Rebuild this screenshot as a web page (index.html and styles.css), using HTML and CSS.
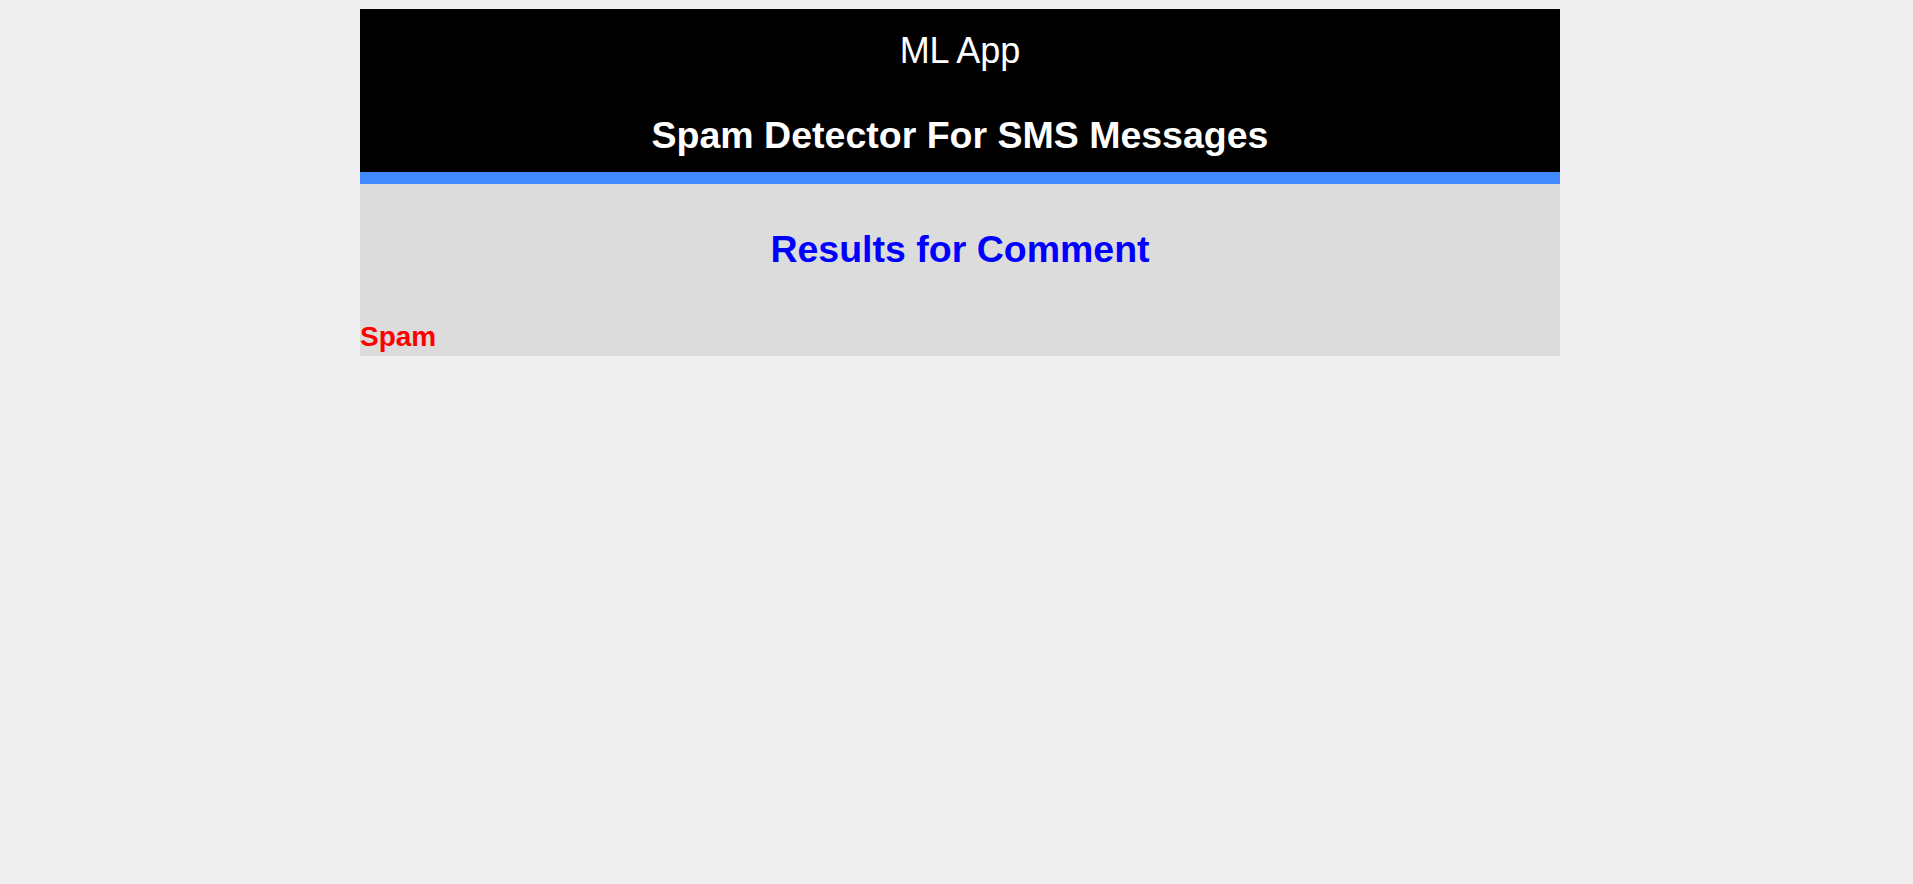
FILE: index.html
```html
<!DOCTYPE html>
<html lang="en">
<head>
<meta charset="utf-8">
<title>ML App</title>
<link rel="stylesheet" href="styles.css">
</head>
<body>
<div class="page">
  <header class="header">
    <div class="app-name">ML App</div>
    <h1 class="title">Spam Detector For SMS Messages</h1>
  </header>
  <div class="accent"></div>
  <main class="results">
    <h2 class="results-title">Results for Comment</h2>
    <div class="verdict spam">Spam</div>
  </main>
</div>
</body>
</html>
```

FILE: styles.css
```css
html, body {
  margin: 0;
  background: #efefef;
}
body {
  padding: 9px 0 0 7px;
  font-family: "Liberation Sans", Arial, sans-serif;
}
.page {
  width: 1200px;
  margin: 0 auto;
}
.header {
  background: #000;
  color: #fff;
  text-align: center;
  padding: 24px 0 18px;
  display: flex;
  flex-direction: column;
  gap: 48px;
}
.app-name {
  font-size: 36px;
  line-height: 36px;
  font-weight: normal;
}
.title {
  margin: 0;
  font-size: 37.5px;
  line-height: 37px;
  font-weight: bold;
}
.accent {
  height: 12px;
  background: #448aff;
}
.results {
  background: #dcdcdc;
  padding: 47px 0 5px;
  display: flex;
  flex-direction: column;
  gap: 55px;
}
.results-title {
  margin: 0;
  text-align: center;
  color: #0000ff;
  font-size: 37.5px;
  line-height: 37px;
  font-weight: bold;
}
.verdict {
  font-size: 28px;
  line-height: 28px;
  font-weight: bold;
}
.spam {
  color: #ff0000;
}
```
